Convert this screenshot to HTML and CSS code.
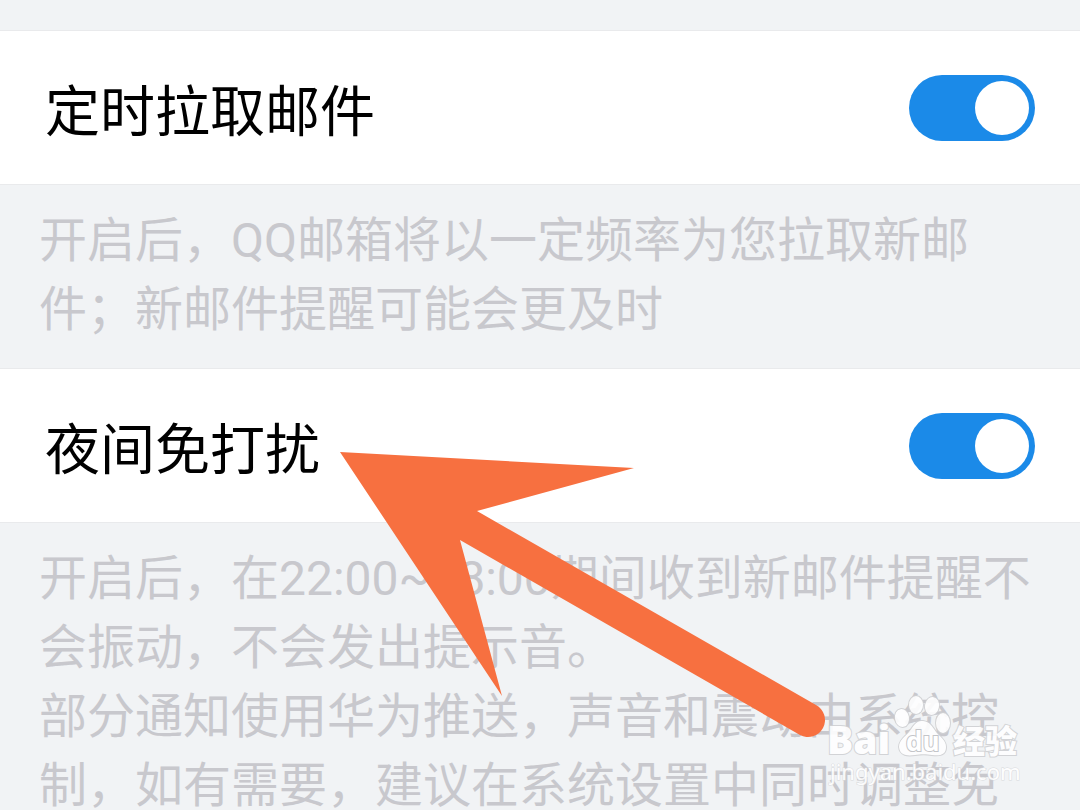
FILE: index.html
```html
<!DOCTYPE html>
<html lang="zh-CN">
<head>
  <meta charset="UTF-8" />
  <meta name="viewport" content="width=device-width, initial-scale=1.0" />
  <title>新邮件提醒</title>
  <link rel="stylesheet" href="styles.css">
</head>
<body>
  <main class="settings">
    <section>
      <div class="row">
        <label for="fetch">定时拉取邮件</label>
        <input type="checkbox" class="switch" id="fetch" checked />
      </div>
      <div class="desc">
        <p>开启后，QQ邮箱将以一定频率为您拉取新邮件；新邮件提醒可能会更及时</p>
      </div>
    </section>

    <section>
      <div class="row">
        <label for="night">夜间免打扰</label>
        <input type="checkbox" class="switch" id="night" checked />
      </div>
      <div class="desc">
        <p>开启后，在22:00~08:00期间收到新邮件提醒不会振动，不会发出提示音。</p>
        <p>部分通知使用华为推送，声音和震动由系统控制，如有需要，建议在系统设置中同时调整免</p>
      </div>
    </section>
  </main>

  <!-- arrow pointing at the night mode row -->
  <svg class="arrow" viewBox="340 451 487 287" aria-hidden="true">
    <path d="M340 452L634 468L477 511L816 705A17 17 0 0 1 800 735L460 540L502 696Z" />
  </svg>

  <!-- watermark -->
  <svg class="watermark" viewBox="0 0 200 96" aria-hidden="true">
    <g class="mark">
      <ellipse cx="76" cy="28" rx="7" ry="9" transform="rotate(-10 76 28)" />
      <ellipse cx="90" cy="15" rx="7" ry="9" />
      <ellipse cx="106" cy="16" rx="7" ry="9" transform="rotate(10 106 16)" />
      <ellipse cx="117" cy="33" rx="7" ry="10" />
      <path d="M97 31C90 30 87 37 83 42C79 47 73 50 73 57C74 66 82 66 89 65C94 64 101 64 106 65C114 66 120 65 120 57C120 50 114 47 110 42C106 36 104 32 97 31Z" />
      <text class="bai" x="1" y="64">Bai</text>
      <text class="jingyan" x="127" y="63">经验</text>
    </g>
    <text class="du" x="80" y="61">du</text>
    <text class="url" x="4" y="90">jingyan.baidu.com</text>
  </svg>
</body>
</html>
```

FILE: styles.css
```css
:root {
  --bg-color: #f1f3f5;
  --line-color: #e9eaec;
  --desc-color: #c8c8cd;
  --switch-color: #1b8ae8;
  --arrow-color: #f77040;
}

* {
  box-sizing: border-box;
}

body {
  margin: 0;
  position: relative;
  font-family: Roboto, "Noto Sans CJK SC", sans-serif;
  background-color: var(--bg-color);
  color: #000;
}

.settings {
  padding-top: 31px;
}

.row {
  display: flex;
  justify-content: space-between;
  align-items: center;
  height: 153px;
  padding: 0 45px;
  background: #fff;
  box-shadow: 0 0 0 1px var(--line-color);
}

.row label {
  padding-top: 8px;
  font-size: 55px;
  line-height: 72px;
}

.switch {
  appearance: none;
  display: flex;
  justify-content: flex-end;
  width: 126px;
  height: 66px;
  margin: 0;
  padding: 6px;
  border-radius: 33px;
  background: #d5d7da;
  cursor: pointer;
}

.switch::before {
  content: "";
  width: 54px;
  height: 54px;
  border-radius: 50%;
  background: #fff;
}

.switch:checked {
  background: var(--switch-color);
}

.switch:not(:checked) {
  justify-content: flex-start;
}

.desc {
  padding: 22px 39px 25px;
  font-size: 48px;
  line-height: 69px;
  color: var(--desc-color);
}

.desc p {
  margin: 0;
}

section:last-child .desc {
  padding-bottom: 0;
}

.arrow {
  position: absolute;
  left: 340px;
  top: 451px;
  width: 487px;
  height: 287px;
  fill: var(--arrow-color);
  pointer-events: none;
}

.watermark {
  position: absolute;
  left: 826px;
  top: 690px;
  width: 200px;
  height: 96px;
  pointer-events: none;
}

.mark {
  fill: #fff;
  stroke: #cfd0d3;
  stroke-width: 2px;
  paint-order: stroke;
  opacity: 0.9;
}

.bai {
  font: 800 39px "Open Sans", sans-serif;
}

.jingyan {
  font: 900 32px "Noto Sans CJK SC", sans-serif;
}

.du {
  font: bold 26px "Open Sans", sans-serif;
  fill: #fff;
  stroke: #c4c5c9;
  stroke-width: 2px;
  paint-order: stroke;
}

.url {
  font: 22px "Noto Sans", sans-serif;
  fill: #fff;
  stroke: #d6d7da;
  stroke-width: 1px;
  paint-order: stroke;
  opacity: 0.9;
}
```
